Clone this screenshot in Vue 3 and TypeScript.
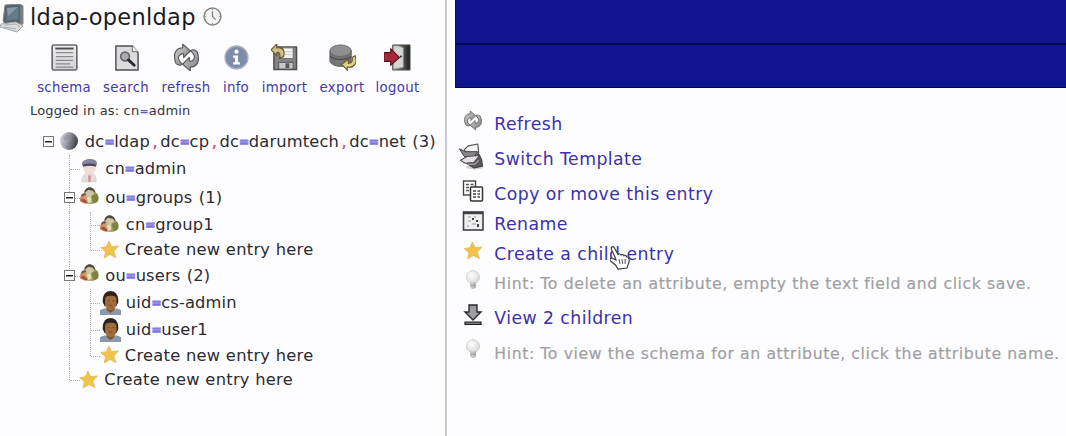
<script setup lang="ts">
interface Tool { icon: string; label: string; width: number }
interface TreeRow {
  level: number
  icon: string
  text: string
  height: number
  shift: number
  count?: number
  open?: boolean
  last?: boolean
}
interface Action { icon: string; text: string; height: number; shift: number; hint?: boolean }

const tools: Tool[] = [
  { icon: 'schema', label: 'schema', width: 66 },
  { icon: 'search', label: 'search', width: 58 },
  { icon: 'refresh', label: 'refresh', width: 62 },
  { icon: 'info', label: 'info', width: 38 },
  { icon: 'import', label: 'import', width: 59 },
  { icon: 'export', label: 'export', width: 56 },
  { icon: 'logout', label: 'logout', width: 55 },
]

const rows: TreeRow[] = [
  { level: 0, icon: 'globe', text: 'dc=ldap,dc=cp,dc=darumtech,dc=net', height: 27, shift: -1, count: 3, open: true },
  { level: 1, icon: 'admin', text: 'cn=admin', height: 28, shift: 1 },
  { level: 1, icon: 'group', text: 'ou=groups', height: 29, shift: -2, count: 1, open: true },
  { level: 2, icon: 'group', text: 'cn=group1', height: 26, shift: -2 },
  { level: 2, icon: 'star', text: 'Create new entry here', height: 24, shift: -1, last: true },
  { level: 1, icon: 'group', text: 'ou=users', height: 27, shift: -3, count: 2, open: true },
  { level: 2, icon: 'user', text: 'uid=cs-admin', height: 27, shift: 0 },
  { level: 2, icon: 'user', text: 'uid=user1', height: 27, shift: 0 },
  { level: 2, icon: 'star', text: 'Create new entry here', height: 25, shift: -1, last: true },
  { level: 1, icon: 'star', text: 'Create new entry here', height: 24, shift: -1, last: true },
]

const actions: Action[] = [
  { icon: 'refresh', text: 'Refresh', height: 34, shift: -4 },
  { icon: 'template', text: 'Switch Template', height: 36, shift: -3 },
  { icon: 'copy', text: 'Copy or move this entry', height: 34, shift: -3 },
  { icon: 'rename', text: 'Rename', height: 25, shift: -3 },
  { icon: 'star', text: 'Create a child entry', height: 35, shift: -3 },
  { icon: 'bulb', text: 'Hint: To delete an attribute, empty the text field and click save.', height: 25, shift: -3, hint: true },
  { icon: 'down', text: 'View 2 children', height: 43, shift: -3 },
  { icon: 'bulb', text: 'Hint: To view the schema for an attribute, click the attribute name.', height: 28, shift: -4, hint: true },
]

const split = (text: string): string[] => text.split(/([=,])/)
const tokenClass = (t: string): string => (t === '=' ? 'eq' : t === ',' ? 'comma' : 'word')
</script>

<template>
  <div class="page">
    <svg class="defs" width="0" height="0" aria-hidden="true">
      <defs>
        <linearGradient id="steel" x1="0" y1="0" x2="1" y2="1"><stop offset="0" stop-color="#d8d8d8" /><stop offset="1" stop-color="#777" /></linearGradient>
        <linearGradient id="paper" x1="0" y1="0" x2="0" y2="1"><stop offset="0" stop-color="#ededee" /><stop offset="1" stop-color="#d2d2d4" /></linearGradient>
        <linearGradient id="door" x1="0" y1="0" x2="1" y2="0"><stop offset="0" stop-color="#a9aaa5" /><stop offset="1" stop-color="#171c18" /></linearGradient>
        <linearGradient id="sphere" x1="0" y1="0" x2="1" y2=".3"><stop offset="0" stop-color="#dadce2" /><stop offset=".45" stop-color="#a5a8b2" /><stop offset="1" stop-color="#444650" /></linearGradient>
        <radialGradient id="glass" cx=".4" cy=".35" r=".7"><stop offset="0" stop-color="#fff" /><stop offset="1" stop-color="#d6d6d6" /></radialGradient>
        <linearGradient id="crowd" x1="0" y1="0" x2="1" y2="0"><stop offset="0" stop-color="#d07a5c" /><stop offset=".45" stop-color="#c3b77f" /><stop offset="1" stop-color="#7c8240" /></linearGradient>
      </defs>
      <symbol id="schema" viewBox="0 0 28 28">
        <rect x="1.2" y="1" width="25.6" height="26" rx="1.5" fill="url(#paper)" stroke="#68686b" stroke-width="1.7" />
        <path d="M4.5 4.7h19" stroke="#4f4f52" stroke-width="2" />
        <path d="M5 9h18M5 13h18M5 17h18M5 20.5h15M5 24h18" stroke="#8b8b8e" stroke-width="1.3" />
      </symbol>
      <symbol id="search" viewBox="0 0 28 28">
        <path d="M3 2h17l6 7v18H3z" fill="#dcdcdd" stroke="#4f4f51" stroke-width="1.5" stroke-linejoin="round" />
        <path d="M20 2v6h6" fill="#f5f5f5" stroke="#666" />
        <circle cx="12.5" cy="13" r="4.5" fill="#a9acaf" stroke="#65676a" stroke-width="1.8" />
        <path d="M16 16.5l6 5.5" stroke="#29292b" stroke-width="3" stroke-linecap="round" />
      </symbol>
      <symbol id="refresh" viewBox="0 0 28 28">
        <path d="M3 20C-1 9 4 4 10 4V0l8 7-7 7v-4c-4 0-6 3-5 6 1 2 2 4 4 5-3 2-5 1-7-1z" fill="url(#steel)" stroke="#5b5b5d" stroke-width="1.2" stroke-linejoin="round" />
        <path d="M25 8c4 11-1 16-7 16v4l-8-7 7-7v4c4 0 6-3 5-6-1-2-2-4-4-5 3-2 5-1 7 1z" fill="url(#steel)" stroke="#5b5b5d" stroke-width="1.2" stroke-linejoin="round" />
      </symbol>
      <symbol id="info" viewBox="0 0 28 28">
        <circle cx="14" cy="14" r="11.8" fill="#7d8da8" stroke="#a7afbc" stroke-width="1.6" />
        <circle cx="14" cy="8" r="2.2" fill="#fff" />
        <path d="M10.5 12h5v7h2v2.2h-7V19h2v-4.8h-2z" fill="#fff" />
      </symbol>
      <symbol id="import" viewBox="0 0 28 28">
        <path d="M4 3h22.500v23.500H3V4z" fill="#858484" stroke="#4f4b48" stroke-width="1.5" />
        <path d="M13 4h10v11H9V9z" fill="#f3f3f4" stroke="#6e6e71" /><path d="M14 8h8M12 11h10" stroke="#ccc" />
        <path d="M8 19h15v7H8z" fill="#c5c5c6" stroke="#515153" /><path d="M15 20h4v5h-4z" fill="#585858" />
        <path d="M0 6l6-6v4c6-1 9 3 7 9l-4 2c1-5-1-7-3-6v3z" fill="#cfbf84" stroke="#61532d" stroke-width="1.1" />
      </symbol>
      <symbol id="export" viewBox="0 0 28 28">
        <path d="M1 7v11c3 7 19 7 22 0V7z" fill="#767677" stroke="#555557" />
        <path d="M1 13c5 4 17 4 22 0" stroke="#4a4a4b" stroke-width="1.4" fill="none" />
        <ellipse cx="12" cy="7" rx="11" ry="6" fill="#8f8f90" stroke="#656567" />
        <path d="M27 12c3 8-1 13-8 12v3l-6-6 7-5v4c3 0 5-2 4-6z" fill="#ded184" stroke="#64552a" stroke-width="1.1" />
      </symbol>
      <symbol id="logout" viewBox="0 0 28 28">
        <path d="M9 1h18v26H9z" fill="url(#door)" stroke="#4c4d48" />
        <path d="M10 2h5l5 2v20l-10 2z" fill="#d5d5d3" stroke="#999" stroke-width=".7" />
        <path d="M0 9h7V5l9 9-9 8v-4H0z" fill="#a62939" stroke="#5d1620" stroke-width="1.2" />
        <circle cx="17.5" cy="13" r="1" fill="#222" />
      </symbol>
      <symbol id="server" viewBox="0 0 24 29">
        <path d="M5 1l15-1 3 2v18l-5 1-13-1-2-3z" fill="#59626a" stroke="#85898e" />
        <path d="M6.5 4l12-1v12l-12 1.5z" fill="#657b8a" /><path d="M7 4l11-1-10 9z" fill="#879cab" />
        <path d="M20 1l3 2v17l-3 1z" fill="#7b7f85" />
        <path d="M1 20l15-2 7 4-6 6L0 23z" fill="#d9dadc" stroke="#a6a8ab" />
        <path d="M4 21l12-1 4 3M4 23l12 2" stroke="#adb0b4" stroke-width="1" fill="none" />
      </symbol>
      <symbol id="clock" viewBox="0 0 18 18">
        <circle cx="9" cy="9" r="8" fill="#f4f4f4" stroke="#858585" stroke-width="1.4" /><path d="M9 4v5l3 3" fill="none" stroke="#808080" stroke-width="1.2" />
        <path d="M9 2v1M16 9h-1M9 16v-1M2 9h1" stroke="#999" />
      </symbol>
      <symbol id="globe" viewBox="0 0 20 24">
        <circle cx="10" cy="12" r="9" fill="url(#sphere)" />
        <path d="M4 8l5-3 3 2-3 4-3 1zM8 14l4 0 1 3-4 3z" fill="#7d808c" opacity=".4" />
      </symbol>
      <symbol id="admin" viewBox="0 0 20 26">
        <path d="M2 25c0-7 3-9 8-9s7 2 7 9z" fill="#e6dcda" stroke="#d2c7c6" stroke-width=".7" />
        <path d="M8.5 17l1.5 2 1.5-2-.5 8H9z" fill="#d48a8c" />
        <ellipse cx="10" cy="10" rx="6.5" ry="7.2" fill="#eedbd5" />
        <path d="M2 6c0-6 15-7 16-1l-1 3H3z" fill="#8584a0" /><path d="M3 8c5-1.500 10-1.500 14 0" stroke="#4b4a5a" stroke-width="2.2" fill="none" />
      </symbol>
      <symbol id="group" viewBox="0 0 20 24">
        <path d="M0 18c0-6 2-8 5-8 1-6 9-8 11-1 4 1 4 6 3 9-4 4-14 4-19 0z" fill="url(#crowd)" />
        <circle cx="10" cy="9" r="4.500" fill="#cfc5a0" />
        <path d="M4.500 10c0-9 11-9 12 0l-3-3-5-1z" fill="#4a4a3c" /><path d="M1 13c1-4 4-4 6-2l-2 1z" fill="#795548" />
        <path d="M12 12l5-1 2 4-2 4-3 1z" fill="#767d3c" opacity=".8" />
        <path d="M1 17c2-2 5-2 7 3-3 0-5-1-7-3z" fill="#a1513a" /><path d="M7 14l4-1 1 5-3 2z" fill="#e5dfc0" />
      </symbol>
      <symbol id="user" viewBox="0 0 22 26">
        <path d="M0 26v-5c4-2 6-2 11-2s8 0 11 2v5z" fill="#8b98aa" /><path d="M7 18h8v3l-4 3-4-3z" fill="#80532e" />
        <path d="M3 13C1-3 21-3 19 13l-2 4H5z" fill="#29221f" />
        <path d="M5.3 10c0-3 2-4 6-4s6 1 6 4v5c-1 4-3 6-6 6s-5-2-6-6z" fill="#a06c38" />
        <path d="M8 11h2M13 11h2M9 16h4" stroke="#7a5126" stroke-width="1.2" />
      </symbol>
      <symbol id="star" viewBox="0 0 20 20">
        <path d="M9.3 1l2.900 6 7.300-.7-5 5.300 2.200 7-6.300-3.400L4.500 19l1.300-6.500L.8 8l6-1z" fill="#f0c44b" stroke="#e2b553" stroke-width=".8" stroke-linejoin="round" />
      </symbol>
      <symbol id="template" viewBox="0 0 26 28">
        <ellipse cx="17" cy="25" rx="9" ry="2.500" fill="#b5b3b6" opacity=".6" />
        <path d="M9 18l12-7 3 6 1 7-9 2-8-5z" fill="#5b575c" stroke="#39363a" stroke-linejoin="round" />
        <path d="M6 7l4-4 10-2 1 9-11 3z" fill="#f1f1f2" stroke="#555" stroke-width="1.200" stroke-linejoin="round" />
        <path d="M1 6l6 3 13 0-4 5-10 0z" fill="#88868b" stroke="#403e41" stroke-linejoin="round" />
        <path d="M2 18l7-4 13-1-6 7-9 1z" fill="#e4e3e6" stroke="#555257" stroke-width="1.200" stroke-linejoin="round" />
        <path d="M10 22l7 0 4-4" stroke="#9b989e" stroke-width="1.500" fill="none" />
      </symbol>
      <symbol id="copy" viewBox="0 0 22 22">
        <rect x="1.5" y="1" width="12" height="14" fill="#fff" stroke="#444" stroke-width="1.4" />
        <path d="M4 4.5h3M8.5 4.5h3M4 7.5h3M4 10.5h3" stroke="#565656" stroke-width="1.3" />
        <rect x="8.5" y="7" width="12" height="14" rx="1" fill="#fff" stroke="#333" stroke-width="1.5" />
        <path d="M11 11h3M15.5 11h2.500M11 14h3M15.500 14h2.500M11 17h3M15.500 17h2.500" stroke="#444" stroke-width="1.3" />
      </symbol>
      <symbol id="rename" viewBox="0 0 22 20">
        <rect x="1.5" y="1" width="19.5" height="18" fill="#eeeeef" stroke="#414247" stroke-width="1.6" /><path d="M1 2h20" stroke="#3e4047" stroke-width="2.4" />
        <path d="M6 6h3M12 6h2M6 10h3M10 13h4M5 15h2" stroke="#999" stroke-width="1.2" /><path d="M10 7h2v2h-2zM14 9h2v2h-2zM15 13h2v3h-2z" fill="#404043" />
      </symbol>
      <symbol id="bulb" viewBox="0 0 16 22">
        <circle cx="8" cy="7.5" r="6.8" fill="url(#glass)" stroke="#cfcfcf" /><path d="M5 13h6v5l-2 2H7l-2-2z" fill="#c5c5c5" /><path d="M10 13v6M5 16h6" stroke="#9c9c9c" />
      </symbol>
      <symbol id="down" viewBox="0 0 20 22">
        <path d="M6 1h8v7h4l-8 8-8-8h4z" fill="#9d9da0" stroke="#2a2a2b" stroke-width="1.4" /><path d="M2 18h16v2.500H2z" fill="#777" stroke="#1f1f20" stroke-width="1.2" />
      </symbol>
    </svg>

    <aside class="sidebar">
      <header class="title">
        <svg class="i-server"><use href="#server" /></svg>
        <h1>ldap-openldap</h1>
        <svg class="i-clock"><use href="#clock" /></svg>
      </header>
      <nav class="tools">
        <a v-for="t in tools" :key="t.label" class="tool" :style="{ width: t.width + 'px' }">
          <svg><use :href="'#' + t.icon" /></svg>
          <span>{{ t.label }}</span>
        </a>
      </nav>
      <p class="login">Logged in as: cn<b>=</b>admin</p>
      <div class="tree">
        <div v-for="(r, i) in rows" :key="i" class="row" :style="{ height: r.height + 'px' }">
          <span v-for="n in r.level" :key="n" class="cell" :class="{ stem: n > 1 }"></span>
          <span class="cell" :class="{ stem: r.level > 0, elbow: r.level > 0, end: r.last }"><i v-if="r.open" class="toggle"></i></span>
          <span class="cell pic" :style="{ paddingBottom: Math.max(0, -2 * r.shift) + 'px', paddingTop: Math.max(0, 2 * r.shift) + 'px' }">
            <svg :class="'n-' + r.icon"><use :href="'#' + r.icon" /></svg>
          </span>
          <span class="name" :class="{ create: r.last }"><span v-for="(t, k) in split(r.text)" :key="k" :class="tokenClass(t)">{{ t }}</span><span v-if="r.count" class="count">({{ r.count }})</span></span>
        </div>
      </div>
    </aside>

    <main class="content">
      <div class="banner top"></div>
      <div class="banner sub"></div>
      <div class="actions">
        <div v-for="(a, i) in actions" :key="i" class="action" :class="{ hint: a.hint }" :style="{ height: a.height + 'px' }">
          <span class="slot" :style="{ paddingBottom: -2 * a.shift + 'px' }"><svg :class="'a-' + a.icon"><use :href="'#' + a.icon" /></svg></span>
          <span class="label">{{ a.text }}</span>
        </div>
      </div>
    </main>

    <svg class="pointer" viewBox="0 0 20 25">
      <path d="M5 12L1.5 4.500C.5 2 3.200.5 4.500 3L8 9.500c1-1 2.500-.5 3 .5 1-1 2.500-.3 3 .8 1-.8 2.500 0 3 1.200 2 0 2.500 3 2 5l-2 6-9 1-2.500-4-5-4c-1.500-2 0-3.500 2-2.500l3.500 1.500z" fill="#fff" stroke="#404045" stroke-width="1.2" />
      <path d="M9 14l1 5M12 14l.7 5M15 14l.2 5" stroke="#555" />
    </svg>
  </div>
</template>

<style>
body { margin: 0; overflow: hidden; }
</style>
<style scoped>
.page { position: relative; display: flex; width: 1066px; height: 436px; overflow: hidden; background: #fdfdff; color: #2b2b30; font-family: "DejaVu Sans", Verdana, sans-serif; }
.defs { position: absolute; }
.sidebar { width: 447px; border-right: 2px solid #c9c9d5; box-sizing: border-box; flex: none; }
.title { display: flex; align-items: center; height: 35px; }
.i-server { width: 24px; height: 29px; margin-top: 1px; }
h1 { margin: 0 0 0 6px; width: 173px; font-weight: 400; font-size: 22.5px; letter-spacing: .3px; line-height: 35px; color: #1b1b1f; }
.i-clock { width: 19px; height: 19px; margin-top: -2px; }
.tools { display: flex; height: 64px; padding-left: 31px; box-sizing: border-box; }
.tool { display: flex; flex-direction: column; align-items: center; flex: none; color: #4438ac; font-size: 13.3px; letter-spacing: .3px; line-height: 18px; }
.tool svg { width: 27px; height: 27px; margin: 9px 0 8px; }
.login { margin: 3px 0 0 30px; height: 18px; line-height: 18px; font-size: 13px; letter-spacing: .18px; white-space: nowrap; color: #333338; }
.login b { display: inline-block; width: 9.5px; font-size: 11px; text-align: center; color: #6154d1; }
.tree { margin: 8px 0 0 38.5px; }
.row { display: flex; align-items: center; }
.cell { position: relative; display: flex; align-items: center; justify-content: center; width: 20.5px; height: 100%; flex: none; box-sizing: border-box; }
.stem::before { content: ""; position: absolute; left: 10px; top: 0; bottom: 0; border-left: 1px dotted #b0b0b3; }
.elbow::after { content: ""; position: absolute; left: 11px; right: 0; top: 50%; border-top: 1px dotted #b0b0b3; }
.stem.end::before { bottom: 50%; }
.toggle { position: relative; z-index: 1; width: 11px; height: 11px; box-sizing: border-box; border: 1px solid #77777a; background: linear-gradient(#222, #222) center / 7px 1.5px no-repeat #fff; }
.pic svg { flex: none; width: 20px; height: 24px; }
.pic .n-star { width: 19px; height: 19px; margin-left: -2px; }
.pic .n-group { width: 19px; height: 23px; margin-left: -1px; }
.pic .n-user { width: 21px; height: 25px; }
.pic .n-admin { width: 19px; height: 25px; }
.name { display: flex; align-items: center; margin-left: 5.3px; font-size: 16.3px; letter-spacing: .14px; line-height: 20px; white-space: pre; }
.create { margin-left: 4.3px; letter-spacing: .27px; }
.eq { width: 9.8px; font-size: 12px; font-weight: 700; letter-spacing: 0; text-align: center; color: #6d63d8; -webkit-text-stroke: 1px #8981e2; }
.comma { width: 10.3px; text-align: center; color: #cf4f78; -webkit-text-stroke: .4px #cf4f78; }
.count { margin-left: 6.5px; }
.content { flex: 1; padding-left: 8px; }
.banner { box-sizing: border-box; background: #0f158e; border-bottom: 2px solid #05064f; border-left: 1px solid #080b60; }
.top { height: 45px; }
.sub { height: 43px; border-bottom-width: 1.5px; }
.actions { padding: 19px 0 0 3px; }
.action { display: flex; align-items: center; color: #3c31aa; font-size: 17.3px; letter-spacing: .44px; white-space: nowrap; }
.slot { display: flex; align-items: center; justify-content: center; width: 30px; margin-right: 6.3px; flex: none; }
.slot svg { flex: none; width: 20px; height: 19px; }
.slot .a-template { width: 26px; height: 27px; margin-left: -4px; }
.slot .a-copy { width: 22px; height: 22px; }
.slot .a-rename { width: 22px; height: 20px; }
.slot .a-bulb { width: 16px; height: 21px; }
.slot .a-down { width: 20px; height: 22px; }
.hint { color: #a0a0a3; font-size: 15.7px; letter-spacing: .59px; }
.hint .label { -webkit-text-stroke: .2px #a0a0a3; }
.pointer { position: absolute; left: 610px; top: 245px; width: 20px; height: 25px; }
</style>
